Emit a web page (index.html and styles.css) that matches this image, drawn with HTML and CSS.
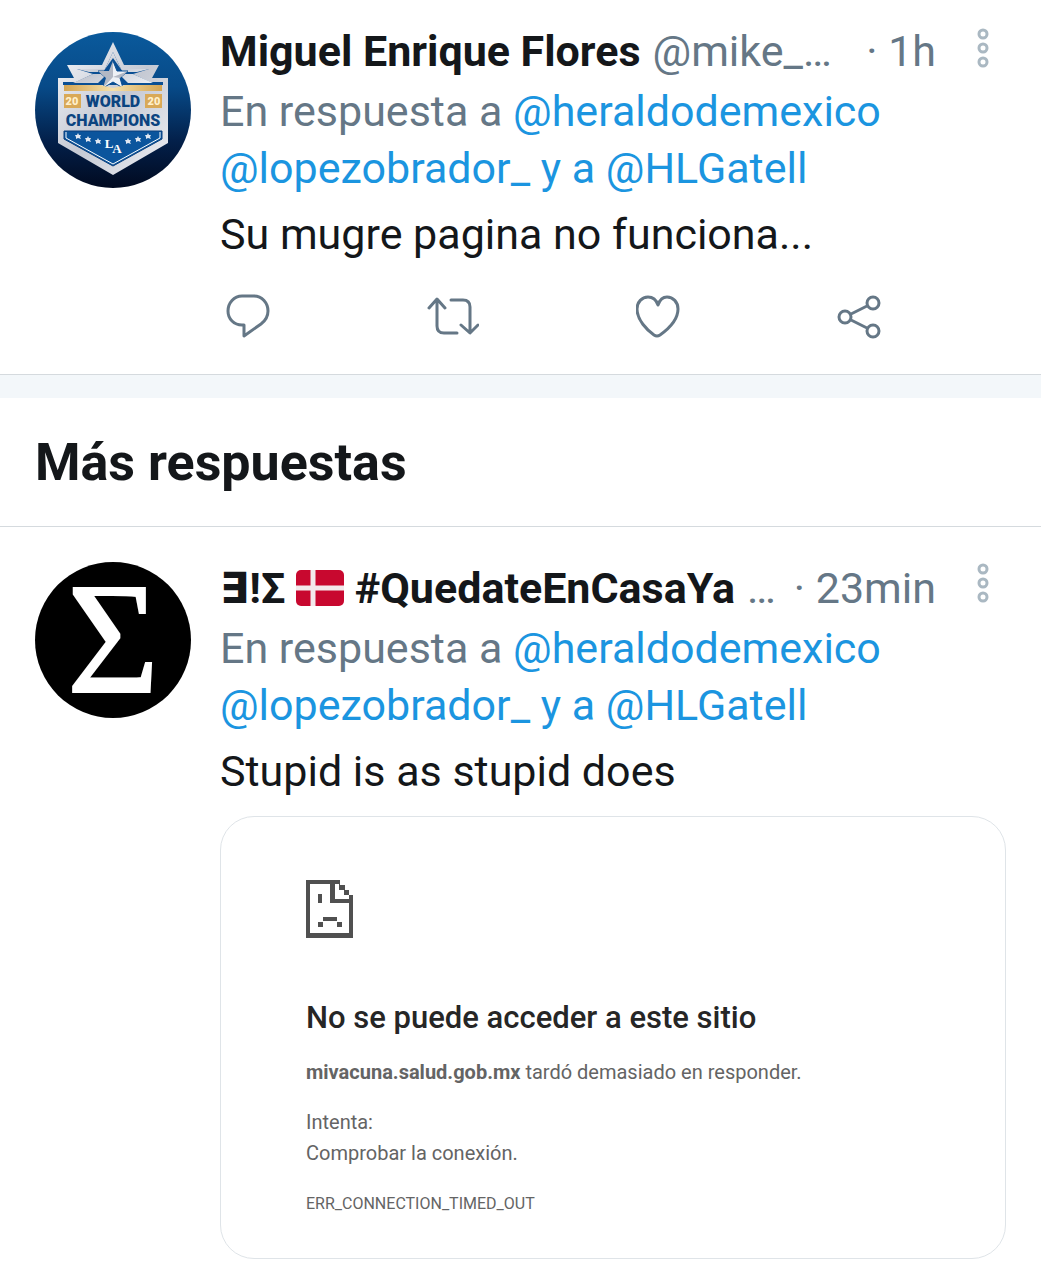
FILE: index.html
```html
<!DOCTYPE html>
<html lang="es">
<head>
    <meta charset="utf-8">
    <title>Más respuestas</title>
    <meta name="viewport" content="width=device-width, initial-scale=1">
    <link rel="stylesheet" href="styles.css">
</head>
<body>
    <main>
        <article class="tweet first">
            <svg class="avatar" viewBox="0 0 156 156" role="img" aria-label="World Champions">
                <defs>
                    <linearGradient id="sky" x1="0" y1="0" x2="0" y2="1">
                        <stop offset="0" stop-color="#0a5a9c"/>
                        <stop offset=".35" stop-color="#074a88"/>
                        <stop offset=".7" stop-color="#03204a"/>
                        <stop offset="1" stop-color="#010a20"/>
                    </linearGradient>
                    <linearGradient id="silver" x1="0" y1="0" x2="1" y2="1">
                        <stop offset="0" stop-color="#f4f6fa"/>
                        <stop offset=".5" stop-color="#c5c9d3"/>
                        <stop offset="1" stop-color="#eef0f5"/>
                    </linearGradient>
                    <linearGradient id="gold" x1="0" y1="0" x2="1" y2="0">
                        <stop offset="0" stop-color="#d5a552"/>
                        <stop offset=".5" stop-color="#f5dfa9"/>
                        <stop offset="1" stop-color="#d5a552"/>
                    </linearGradient>
                </defs>
                <circle cx="78" cy="78" r="78" fill="url(#sky)"/>
                <path fill="url(#silver)" d="M23 46h16l-7-13h35l11-23 11 23h35l-7 13h16v65l-55 32-55-32z"/>
                <path fill="#0b4f93" d="M28 50h13l17-8-16-5h28l8-17 8 17h28l-16 5 17 8h13v3H28z"/>
                <path fill="url(#silver)" d="M42 37h28l8-17 8 17h28l-12 3H88l-10-14-10 14H54zM38 51l20-9h14l-9 9zM118 51l-20-9H84l9 9z"/>
                <path fill="#eef1f6" stroke="#0b4f93" stroke-width="1" d="M78 29l4 10h11l-8 7 3 10-10-6-10 6 3-10-8-7h11z"/>
                <path fill="#b3b8c4" d="M78 29v16l-10 11 3-10-8-7h11zM78 45l15-6-8 7z"/>
                <path fill="url(#gold)" d="M29 53h36l13 3 13-3h36v6H29z"/>
                <path fill="#d9a957" d="M29 62h17v14H29zM110 62h17v14h-17z"/>
                <g class="badge-text">
                    <text class="badge-year" x="37" y="73">20</text>
                    <text class="badge-year" x="119" y="73">20</text>
                    <text x="78" y="75">WORLD</text>
                    <text x="78" y="94">CHAMPIONS</text>
                </g>
                <path fill="#0b559d" stroke="#0a3f7c" stroke-width="1" d="M29 99h98v8l-49 27-49-27z"/>
                <path fill="none" stroke="#fff" stroke-width="1" d="M31 100v6l47 26 47-26v-6"/>
                <g fill="#dfe7f2">
                    <path id="star" d="M43 101l1 2h2l-1 2 1 2-3-1-2 1v-2l-1-2h2z"/>
                    <use href="#star" x="10" y="3"/>
                    <use href="#star" x="20" y="5"/>
                    <use href="#star" x="50" y="5"/>
                    <use href="#star" x="60" y="3"/>
                    <use href="#star" x="70"/>
                </g>
                <g class="badge-la">
                    <text x="74" y="116">L</text>
                    <text x="82" y="121">A</text>
                </g>
            </svg>
            <div class="content">
                <header>
                    <b class="name">Miguel Enrique Flores</b>
                    <span class="handle">@mike_…</span>
                    <span class="time">· 1h</span>
                    <button class="more" aria-label="Más opciones">
                        <svg width="14" height="42" viewBox="0 0 14 42"><circle cx="7" cy="7" r="4"/><circle cx="7" cy="21" r="4"/><circle cx="7" cy="35" r="4"/></svg>
                    </button>
                </header>
                <p class="reply-to">En respuesta a <a href="#">@heraldodemexico</a> <a href="#">@lopezobrador_ y a @HLGatell</a></p>
                <p class="text">Su mugre pagina no funciona...</p>
                <div class="actions">
                    <button aria-label="Responder">
                        <svg width="44" height="46" viewBox="0 0 44 46"><path d="M16 3h12c8 0 14 7 14 15 0 5-3 10-7 13L18 43V32h-2C8 32 2 26 2 18S8 3 16 3z"/></svg>
                    </button>
                    <button aria-label="Retwittear">
                        <svg width="52" height="46" viewBox="0 0 52 46"><path d="M2 15l8-9 8 9M10 7v26q0 7 7 7h13M24 7h12q7 0 7 7v25M34 32l9 8 8-8"/></svg>
                    </button>
                    <button aria-label="Me gusta">
                        <svg width="44" height="46" viewBox="0 0 44 46"><path d="M22 12C20 6 16 4 12 4 6 4 1 9 1 16c0 11 10 21 17 26q3 2 6 0c7-5 18-15 18-26 0-7-5-12-11-12-4 0-7 2-9 8z"/></svg>
                    </button>
                    <button aria-label="Compartir">
                        <svg width="44" height="46" viewBox="0 0 44 46"><circle cx="8" cy="24" r="6"/><circle cx="36" cy="10" r="6"/><circle cx="36" cy="38" r="6"/><path d="M14 21l16-8M14 27l16 8"/></svg>
                    </button>
                </div>
            </div>
        </article>

        <h2 class="section-title">Más respuestas</h2>

        <article class="tweet second">
            <svg class="avatar" viewBox="0 0 156 156" role="img" aria-label="Sigma">
                <circle cx="78" cy="78" r="78"/>
                <text class="sigma" x="78" y="130">Σ</text>
            </svg>
            <div class="content">
                <header>
                    <b class="name">∃!Σ <svg class="flag" width="48" height="36" viewBox="0 0 48 36"><rect width="48" height="36" rx="5" fill="#c8082f"/><path d="M17 0v36M0 18h48" stroke="#f3e9ec" stroke-width="5"/></svg> #QuedateEnCasaYa</b>
                    <span class="handle">…</span>
                    <span class="time">· 23min</span>
                    <button class="more" aria-label="Más opciones">
                        <svg width="14" height="42" viewBox="0 0 14 42"><circle cx="7" cy="7" r="4"/><circle cx="7" cy="21" r="4"/><circle cx="7" cy="35" r="4"/></svg>
                    </button>
                </header>
                <p class="reply-to">En respuesta a <a href="#">@heraldodemexico</a> <a href="#">@lopezobrador_ y a @HLGatell</a></p>
                <p class="text">Stupid is as stupid does</p>
                <section class="card">
                    <svg class="sad-page" width="48" height="58" viewBox="0 0 48 58" fill="#505050">
                        <path fill-rule="evenodd" d="M0 0h34v5h5v5h4v5h4v43H0zM4 4v49h39V23H24V4zM29 4v15h14v-4h-5v-5h-5V4z"/>
                        <path d="M12 14h4v9h-4zM17 37h14v4H17zM12 42h5v5h-5zM31 42h5v5h-5z"/>
                    </svg>
                    <h3>No se puede acceder a este sitio</h3>
                    <p><b>mivacuna.salud.gob.mx</b> tardó demasiado en responder.</p>
                    <p>Intenta:<br>Comprobar la conexión.</p>
                    <p class="error-code">ERR_CONNECTION_TIMED_OUT</p>
                </section>
            </div>
        </article>
    </main>
</body>
</html>
```
FILE: styles.css
```css
body {
    margin: 0;
    background: #fff;
    color: #14171a;
    font-family: Roboto, "DejaVu Sans", sans-serif;
    font-size: 43px;
    line-height: 57px;
}

p, h2, h3 {
    margin: 0;
}

a {
    color: #1b95e0;
    text-decoration: none;
}

button {
    display: block;
    padding: 0;
    border: 0;
    background: none;
    cursor: pointer;
}

button svg {
    display: block;
    fill: none;
    stroke: #657786;
    stroke-width: 3px;
    stroke-linecap: round;
    stroke-linejoin: round;
}

.tweet {
    display: flex;
    gap: 29px;
    padding: 0 35px;
}

.first {
    padding-top: 23px;
    padding-bottom: 35px;
    border-bottom: 1px solid #d5dade;
}

.first .avatar {
    margin-top: 9px;
}

.second {
    padding-top: 33px;
    padding-bottom: 22px;
}

.second .avatar {
    margin-top: 2px;
}

.avatar {
    flex: none;
    width: 156px;
    height: 156px;
    overflow: visible;
}

.content {
    flex: 1;
    min-width: 0;
}

header {
    display: flex;
    height: 60px;
    white-space: nowrap;
}

.name {
    font-weight: 700;
}

.handle {
    margin-left: 12px;
}

.handle, .time, .reply-to {
    color: #657786;
}

.time {
    margin-left: auto;
}

.more {
    height: 42px;
    margin: 4px 16px 0 40px;
}

.more svg {
    stroke: #aab8c2;
}

.second .more {
    margin-top: 2px;
}

.flag {
    vertical-align: -3px;
}

.text {
    margin-top: 9px;
}

.actions {
    display: flex;
    justify-content: space-between;
    margin-top: 30px;
    padding: 0 125px 0 6px;
}

.section-title {
    padding: 36px 35px 35px;
    border-top: 23px solid #f3f7fa;
    border-bottom: 1px solid #d5dade;
    font-size: 52px;
    font-weight: 700;
}

/* avatars */
.badge-text, .badge-la, .sigma {
    text-anchor: middle;
}

.badge-text {
    font-size: 16px;
    font-weight: 900;
    fill: #0b4480;
}

.badge-year {
    font-size: 11px;
    fill: #fff0cb;
}

.badge-la {
    font-family: "Liberation Serif", serif;
    font-size: 13px;
    font-weight: 700;
    fill: #fff;
}

.sigma {
    font-family: "Liberation Serif", serif;
    font-size: 158px;
    fill: #fff;
    stroke: #fff;
    stroke-width: 2px;
}

/* attached error page */
.card {
    margin-top: 16px;
    padding: 63px 85px 39px;
    border: 1px solid #dfe4e8;
    border-radius: 34px;
    color: #646464;
    font-size: 20px;
    line-height: 31px;
}

.card p {
    margin-bottom: 19px;
}

.card h3 {
    margin: 60px 0 19px;
    color: #262626;
    font-size: 31px;
    font-weight: 500;
    line-height: 40px;
}

.sad-page {
    display: block;
}

.card .error-code {
    margin-bottom: 0;
    font-size: 16px;
}
```
